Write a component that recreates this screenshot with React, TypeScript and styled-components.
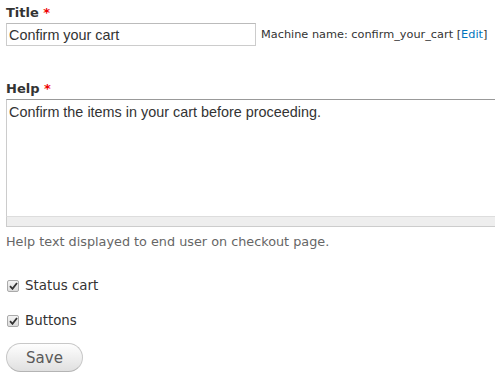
import React from "react";
import styled, { createGlobalStyle } from "styled-components";

const Global = createGlobalStyle`
  html, body { margin: 0; padding: 0; background: #fff; overflow: hidden; }
  body { font-family: "DejaVu Sans", Verdana, sans-serif; color: #333; }
`;

const Page = styled.form`
  padding: 4px 0 0 6px;
  width: 540px;
`;

const Field = styled.div<{ $mb?: number }>`
  margin-bottom: ${(p) => p.$mb ?? 0}px;
`;

const Label = styled.label`
  display: block;
  font-weight: bold;
  font-size: 13px;
  line-height: 17px;
  color: #333;
  margin-bottom: 2px;
`;

const Req = styled.span`
  color: #e00;
  font-size: 13px;
`;

const Row = styled.div`
  display: flex;
  align-items: center;
  gap: 5px;
`;

const TextInput = styled.input`
  box-sizing: border-box;
  width: 250px;
  height: 23px;
  border: 1px solid #ccc;
  border-top-color: #bbb;
  padding: 1px 2px;
  font-family: "Liberation Sans", Arial, sans-serif;
  font-size: 14.4px;
  color: #333;
  outline: none;
`;

const Machine = styled.span`
  font-size: 11.3px;
  color: #333;
  a { color: #0074bd; text-decoration: none; }
`;

const AreaWrap = styled.div`
  width: 520px;
`;

const TextArea = styled.textarea`
  display: block;
  box-sizing: border-box;
  width: 100%;
  height: 117px;
  border: 1px solid #ccc;
  border-top-color: #999;
  border-bottom: none;
  padding: 4px 2px;
  font-family: "Liberation Sans", Arial, sans-serif;
  font-size: 14.4px;
  color: #333;
  resize: none;
  outline: none;
  margin: 0;
`;

const Grippie = styled.div`
  height: 9px;
  background: #eee;
  border: 1px solid #ccc;
  border-top-color: #ddd;
`;

const Desc = styled.div`
  font-size: 12.8px;
  color: #666;
  margin-top: 7px;
`;

const CheckRow = styled.label<{ $mb: number }>`
  display: flex;
  align-items: center;
  gap: 6px;
  font-size: 13.4px;
  color: #333;
  margin-bottom: ${(p) => p.$mb}px;
`;

const Box = styled.span`
  box-sizing: border-box;
  width: 12px;
  height: 12px;
  border: 1px solid #aaa;
  border-radius: 2px;
  background: linear-gradient(#f4f4f4, #dcdcdc);
  display: flex;
  align-items: center;
  justify-content: center;
  margin-left: 1px;
`;

const SaveBtn = styled.button`
  width: 77px;
  height: 29px;
  border-radius: 15px;
  border: 1px solid #c8c8c8;
  border-bottom-color: #b4b4b4;
  background: linear-gradient(#fefefe, #e0e0e0);
  font-family: "DejaVu Sans", Verdana, sans-serif;
  font-size: 15px;
  color: #5a5a5a;
  padding: 0;
`;

const Check = () => (
  <Box>
    <svg width="9" height="8" viewBox="0 0 9 8">
      <path d="M1 4.2 L3.5 6.8 L8 1" stroke="#333" strokeWidth="1.8" fill="none" />
    </svg>
  </Box>
);

export default function App() {
  return (
    <>
      <Global />
      <Page>
        <Field $mb={34}>
          <Label>
            Title <Req>*</Req>
          </Label>
          <Row>
            <TextInput defaultValue="Confirm your cart" />
            <Machine>
              Machine name: confirm_your_cart [<a href="#">Edit</a>]
            </Machine>
          </Row>
        </Field>
        <Field $mb={29}>
          <Label>
            Help <Req>*</Req>
          </Label>
          <AreaWrap>
            <TextArea defaultValue="Confirm the items in your cart before proceeding." />
            <Grippie />
          </AreaWrap>
          <Desc>Help text displayed to end user on checkout page.</Desc>
        </Field>
        <CheckRow $mb={20}>
          <Check />
          Status cart
        </CheckRow>
        <CheckRow $mb={15}>
          <Check />
          Buttons
        </CheckRow>
        <SaveBtn type="button">Save</SaveBtn>
      </Page>
    </>
  );
}
